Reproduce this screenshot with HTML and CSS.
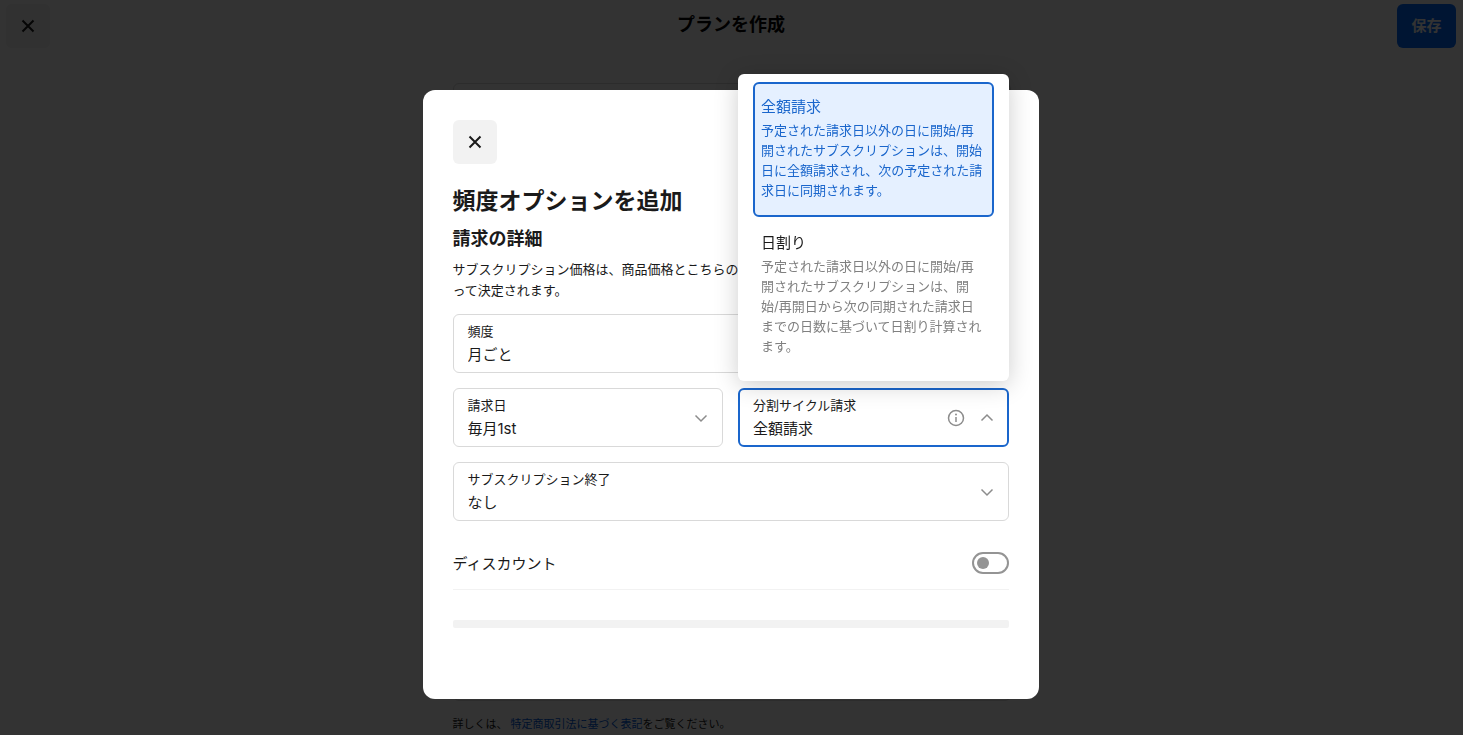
FILE: index.html
```html
<!DOCTYPE html>
<html lang="ja">
<head>
    <meta charset="UTF-8">
    <meta name="viewport" content="width=device-width, initial-scale=1.0">
    <title>プランを作成</title>
    <link rel="stylesheet" href="styles.css">
</head>
<body>
    <div class="page">
        <header class="topbar">
            <button type="button" class="close-btn" aria-label="閉じる">
                <svg width="14" height="14" viewBox="0 0 14 14"><path d="M1.500 1.500l11 11M12.500 1.500l-11 11"/></svg>
            </button>
            <h1>プランを作成</h1>
            <button type="button" class="save-btn">保存</button>
        </header>
        <main class="content">
            <section class="plan-card"></section>
            <p class="legal">詳しくは、 <a href="#">特定商取引法に基づく表記</a>をご覧ください。</p>
        </main>
    </div>

    <div class="overlay">
        <div class="modal" role="dialog" aria-labelledby="modalTitle">
            <button type="button" class="close-btn" aria-label="閉じる">
                <svg width="14" height="14" viewBox="0 0 14 14"><path d="M1.500 1.500l11 11M12.500 1.500l-11 11"/></svg>
            </button>
            <h2 id="modalTitle">頻度オプションを追加</h2>
            <h3>請求の詳細</h3>
            <p class="description">サブスクリプション価格は、商品価格とこちらの<br>って決定されます。</p>

            <form class="fields">
                <div class="field wide">
                    <div class="field-text">
                        <label for="frequency">頻度</label>
                        <select id="frequency"><option>月ごと</option></select>
                    </div>
                    <svg class="icon" width="14" height="14" viewBox="0 0 14 14"><path d="M1.500 4.500L7 10l5.500-5.500"/></svg>
                </div>
                <div class="field">
                    <div class="field-text">
                        <label for="billingDay">請求日</label>
                        <select id="billingDay"><option>毎月1st</option></select>
                    </div>
                    <svg class="icon" width="14" height="14" viewBox="0 0 14 14"><path d="M1.500 4.500L7 10l5.500-5.500"/></svg>
                </div>
                <div class="field open">
                    <div class="field-text">
                        <label for="splitCycle">分割サイクル請求</label>
                        <select id="splitCycle"><option>全額請求</option><option>日割り</option></select>
                    </div>
                    <svg class="icon info" width="18" height="18" viewBox="0 0 18 18"><circle cx="9" cy="9" r="7.500"/><path d="M9 8v5"/><circle class="dot" cx="9" cy="5.500" r="1"/></svg>
                    <svg class="icon" width="14" height="14" viewBox="0 0 14 14"><path d="M1.500 9.500L7 4l5.500 5.500"/></svg>
                    <div class="dropdown" role="listbox">
                        <button type="button" class="option selected" role="option" aria-selected="true">
                            <span class="option-title">全額請求</span>
                            <span class="option-text">予定された請求日以外の日に開始/再開されたサブスクリプションは、開始日に全額請求され、次の予定された請求日に同期されます。</span>
                        </button>
                        <button type="button" class="option" role="option" aria-selected="false">
                            <span class="option-title">日割り</span>
                            <span class="option-text">予定された請求日以外の日に開始/再開されたサブスクリプションは、開始/再開日から次の同期された請求日までの日数に基づいて日割り計算されます。</span>
                        </button>
                    </div>
                </div>
                <div class="field wide">
                    <div class="field-text">
                        <label for="ending">サブスクリプション終了</label>
                        <select id="ending"><option>なし</option></select>
                    </div>
                    <svg class="icon" width="14" height="14" viewBox="0 0 14 14"><path d="M1.500 4.500L7 10l5.500-5.500"/></svg>
                </div>
            </form>

            <div class="discount">
                <label for="discount">ディスカウント</label>
                <input type="checkbox" id="discount" class="toggle">
            </div>
            <div class="divider"></div>
        </div>
    </div>
</body>
</html>
```

FILE: styles.css
```css
* {
    box-sizing: border-box;
}

body {
    margin: 0;
    font-family: Inter, "Noto Sans CJK JP", sans-serif;
    font-size: 15px;
    color: #1a1a1a;
    background-color: #fff;
}

h1, h2, h3, p {
    margin: 0;
}

button, select {
    font-family: inherit;
    color: inherit;
}

.page {
    height: 100vh;
    display: flex;
    flex-direction: column;
    overflow: hidden;
}

.topbar {
    display: grid;
    grid-template-columns: 1fr auto 1fr;
    align-items: center;
    padding: 4px 7px 4px 6px;
}

.topbar h1 {
    font-size: 18px;
    font-weight: 600;
    line-height: 24px;
    padding-bottom: 2px;
    color: #000;
}

.close-btn {
    width: 44px;
    height: 44px;
    display: flex;
    align-items: center;
    justify-content: center;
    padding: 0;
    border: none;
    border-radius: 6px;
    background-color: #f2f2f2;
    cursor: pointer;
}

.close-btn svg {
    fill: none;
    stroke: #1a1a1a;
    stroke-width: 2;
}

.save-btn {
    justify-self: end;
    width: 59px;
    height: 44px;
    padding: 0 0 3px;
    border: none;
    border-radius: 6px;
    background-color: #006aff;
    color: #fff;
    font-size: 15px;
    font-weight: 600;
    cursor: pointer;
}

.content {
    flex: 1;
    display: flex;
    flex-direction: column;
    width: 558px;
    max-width: 100%;
    margin: 0 auto;
    padding-top: 31px;
}

.plan-card {
    flex: 1;
    border: 1px solid #d9d9d9;
    border-radius: 6px;
}

.legal {
    padding: 14px 0 2px;
    font-size: 11px;
    line-height: 18px;
}

.legal a {
    color: #005ad9;
    text-decoration: none;
}

.overlay {
    position: fixed;
    inset: 0;
    display: flex;
    justify-content: center;
    padding: 90px 2px 36px 0;
    background-color: rgba(0, 0, 0, 0.8);
}

.modal {
    width: 616px;
    max-width: 100%;
    padding: 30px;
    border-radius: 12px;
    background-color: #fff;
}

.modal h2 {
    margin-top: 19px;
    font-size: 23px;
    font-weight: 600;
    line-height: 36px;
}

.modal h3 {
    margin-top: 5px;
    font-size: 18px;
    font-weight: 600;
    line-height: 30px;
}

.description {
    margin-top: 5px;
    font-size: 13px;
    line-height: 21px;
}

.fields {
    display: grid;
    grid-template-columns: 1fr 1fr;
    gap: 15px;
    margin-top: 13px;
}

.field {
    position: relative;
    display: flex;
    align-items: center;
    gap: 15px;
    height: 59px;
    padding: 0 14px;
    border: 1px solid #d9d9d9;
    border-radius: 6px;
}

.wide {
    grid-column: span 2;
}

.open {
    padding: 0 13px;
    border: 2px solid #1a66cc;
}

.field-text {
    flex: 1;
    display: flex;
    flex-direction: column;
    gap: 2px;
}

.field label {
    font-size: 13px;
    line-height: 20px;
}

.field select {
    height: 24px;
    padding: 0;
    border: none;
    outline: none;
    appearance: none;
    background: none;
    font-size: 15px;
    line-height: 24px;
}

.icon {
    fill: none;
    stroke: #8c8c8c;
    stroke-width: 1.5;
    pointer-events: none;
}

.icon .dot {
    fill: #8c8c8c;
    stroke: none;
}

.dropdown {
    position: absolute;
    left: -2px;
    right: -2px;
    bottom: calc(100% + 9px);
    display: flex;
    flex-direction: column;
    gap: 1px;
    padding: 8px 15px;
    border-radius: 6px;
    background-color: #fff;
    box-shadow: 0 4px 24px rgba(0, 0, 0, 0.2);
}

.option {
    padding: 12px 6px 15px;
    border: 2px solid transparent;
    border-radius: 6px;
    background-color: #fff;
    text-align: left;
    cursor: pointer;
}

.option-title {
    display: block;
    margin-bottom: 2px;
    font-size: 15px;
    line-height: 22px;
}

.option-text {
    display: block;
    font-size: 13px;
    line-height: 20px;
    color: #808080;
}

.selected {
    border-color: #1a66cc;
    background-color: #e5f0ff;
    color: #1a66cc;
}

.selected .option-text {
    color: inherit;
}

.discount {
    display: flex;
    align-items: center;
    justify-content: space-between;
    height: 54px;
    margin-top: 15px;
    border-bottom: 1px solid #f2f2f2;
}

.toggle {
    appearance: none;
    width: 37px;
    height: 22px;
    margin: 0;
    padding: 3px;
    border: 2px solid #949494;
    border-radius: 11px;
    cursor: pointer;
}

.toggle::before {
    content: "";
    display: block;
    width: 12px;
    height: 12px;
    border-radius: 50%;
    background-color: #949494;
}

.toggle:checked::before {
    margin-left: auto;
}

.divider {
    height: 8px;
    margin-top: 30px;
    border-radius: 2px;
    background-color: #f2f2f2;
}
```
